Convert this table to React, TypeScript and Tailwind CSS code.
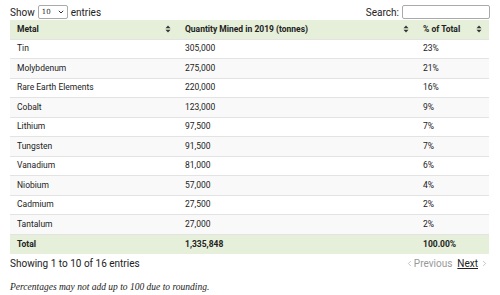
import { ChevronLeft, ChevronRight } from "lucide-react";

const rows = [
  ["Tin", "305,000", "23%"],
  ["Molybdenum", "275,000", "21%"],
  ["Rare Earth Elements", "220,000", "16%"],
  ["Cobalt", "123,000", "9%"],
  ["Lithium", "97,500", "7%"],
  ["Tungsten", "91,500", "7%"],
  ["Vanadium", "81,000", "6%"],
  ["Niobium", "57,000", "4%"],
  ["Cadmium", "27,500", "2%"],
  ["Tantalum", "27,000", "2%"],
];

const SortIcon = () => (
  <svg width="6" height="8" viewBox="0 0 6 8" className="shrink-0">
    <path d="M3 0.5 L5.5 3.2 H0.5 Z" fill="#333" />
    <path d="M3 7.5 L5.5 4.8 H0.5 Z" fill="#333" />
  </svg>
);

const Th = ({ label, w }: { label: string; w: string }) => (
  <th className={`${w} h-[19px] px-[7px] text-left font-bold`}>
    <div className="flex items-center justify-between">
      <span>{label}</span>
      <SortIcon />
    </div>
  </th>
);

export default function App() {
  return (
    <div className="w-[500px] h-[295px] bg-white px-[10px] pt-[5px] text-[#222] font-['Roboto',sans-serif] overflow-hidden">
      <div className="flex items-center justify-between h-[14px] text-[10px]">
        <div className="flex items-center gap-[3px]">
          <span>Show</span>
          <div className="flex items-center justify-between w-[30px] h-[14px] border border-[#aaa] rounded-[2px] px-[3px] text-[7px] font-['DejaVu_Serif',serif]">
            <span>10</span>
            <svg width="6" height="4" viewBox="0 0 6 4">
              <path d="M0.8 0.8 L3 3 L5.2 0.8" stroke="#333" strokeWidth="1" fill="none" />
            </svg>
          </div>
          <span>entries</span>
        </div>
        <div className="flex items-center gap-[3px]">
          <span>Search:</span>
          <div className="w-[88px] h-[14px] border border-[#aaa] rounded-[2px] bg-white" />
        </div>
      </div>

      <table className="w-[479px] mt-[1px] border-collapse text-[8.5px] table-fixed">
        <thead>
          <tr className="bg-[#e5efd9] text-[#222]">
            <Th label="Metal" w="w-[168px]" />
            <Th label="Quantity Mined in 2019 (tonnes)" w="w-[238px]" />
            <Th label="% of Total" w="w-[73px]" />
          </tr>
        </thead>
        <tbody>
          {rows.map((r, i) => (
            <tr key={r[0]} className={`h-[19.5px] border-t border-[#e3e3e3] ${i % 2 === 1 ? "bg-[#f9f9f9]" : "bg-white"}`}>
              <td className="px-[7px]">{r[0]}</td>
              <td className="px-[7px]">{r[1]}</td>
              <td className="px-[7px]">{r[2]}</td>
            </tr>
          ))}
          <tr className="h-[19.5px] bg-[#e5efd9] font-bold border-t border-[#e3e3e3]">
            <td className="px-[7px]">Total</td>
            <td className="px-[7px]">1,335,848</td>
            <td className="px-[7px]">100.00%</td>
          </tr>
        </tbody>
      </table>

      <div className="flex items-start justify-between mt-[2px] text-[10px] w-[479px]">
        <span>Showing 1 to 10 of 16 entries</span>
        <div className="flex items-center gap-[5px]">
          <span className="flex items-center text-[#999]">
            <ChevronLeft size={9} strokeWidth={1.5} />
            Previous
          </span>
          <span className="flex items-center">
            <span className="underline">Next</span>
            <ChevronRight size={9} strokeWidth={1.5} className="text-[#999] ml-[2px]" />
          </span>
        </div>
      </div>

      <p className="mt-[9px] text-[9.5px] italic font-['Liberation_Serif',serif] text-[#222]">
        Percentages may not add up to 100 due to rounding.
      </p>
    </div>
  );
}
